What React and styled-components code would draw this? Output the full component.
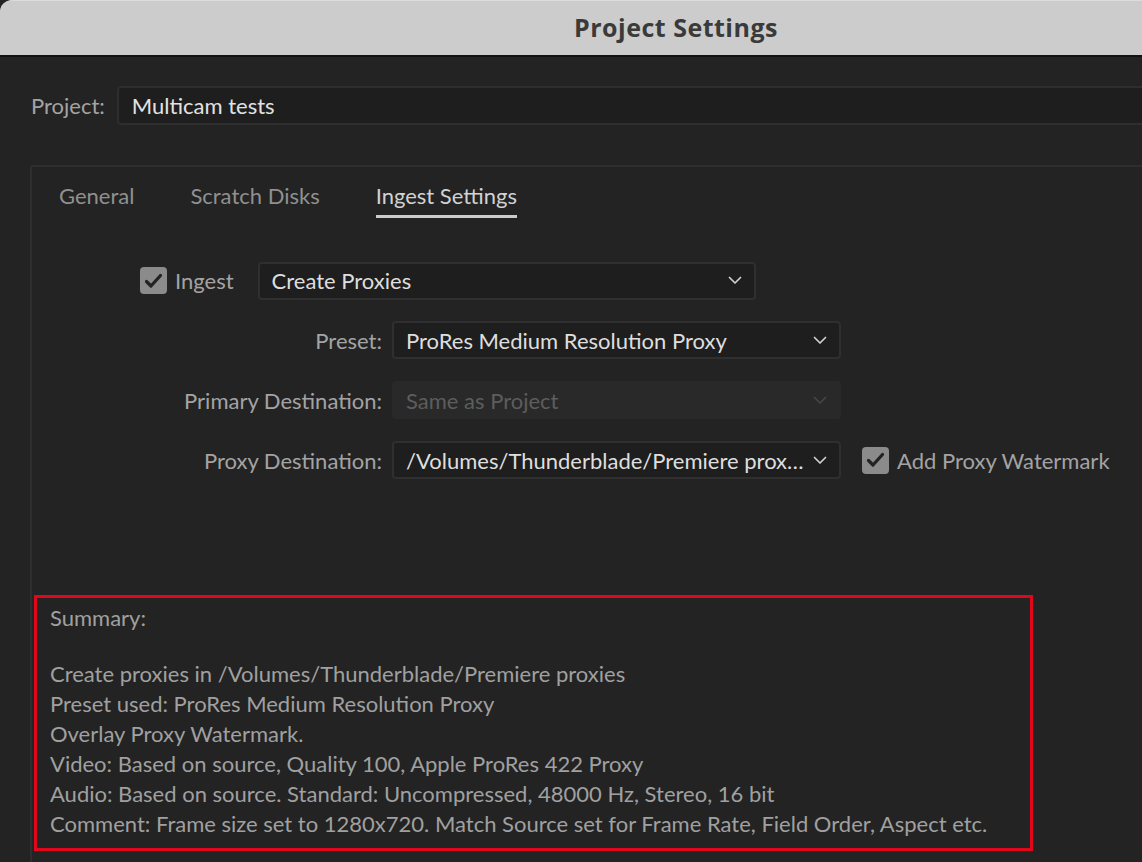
import React from "react";
import styled, { createGlobalStyle } from "styled-components";

const Global = createGlobalStyle`
  html, body { margin: 0; padding: 0; background: #232323; overflow: hidden; }
  #root { width: 1142px; height: 862px; overflow: hidden; }
  * { box-sizing: border-box; }
`;

const FONT = `"Lato", "Noto Sans", sans-serif`;

const Window = styled.div`
  width: 1352px;
  height: 862px;
  background: #232323;
  font-family: ${FONT};
  font-size: 22px;
  color: #a2a2a2;
`;

const TitleBar = styled.div`
  height: 57px;
  background: #cccccc;
  border-top-left-radius: 12px;
  border-top: 1px solid #dcdcdc;
  border-bottom: 2px solid #121212;
  display: flex;
  align-items: center;
  justify-content: center;
`;

const Title = styled.div`
  font-family: "Open Sans", "Noto Sans", sans-serif;
  font-weight: 700;
  font-size: 25px;
  letter-spacing: 0.5px;
  color: #3a3a3a;
  margin-top: -3px;
`;

const Body = styled.div`
  padding: 29px 31px 0 30px;
`;

const ProjectRow = styled.div`
  display: flex;
  align-items: center;
  gap: 12px;
  padding-left: 1px;
`;

const Label = styled.span`
  color: #a3a3a3;
  white-space: nowrap;
`;

const TextInput = styled.div`
  flex: 1;
  height: 39px;
  background: #1e1e1e;
  border: 2px solid #2e2e2e;
  border-radius: 4px;
  display: flex;
  align-items: center;
  padding-left: 13px;
  color: #e2e2e2;
`;

const Panel = styled.div`
  margin-top: 40px;
  border: 2px solid #2e2e2e;
  border-bottom: none;
  border-radius: 3px 3px 0 0;
  height: 720px;
`;

const Tabs = styled.div`
  display: flex;
  gap: 56px;
  padding: 16px 0 0 27px;
`;

const Tab = styled.div`
  color: ${(p) => (p.$active ? "#d2d2d2" : "#909090")};
  padding-bottom: 6px;
  border-bottom: 3px solid ${(p) => (p.$active ? "#cbcbcb" : "transparent")};
  line-height: 26px;
`;

const Form = styled.div`
  margin-top: 44px;
  display: flex;
  flex-direction: column;
  gap: 22px;
`;

const IngestRow = styled.div`
  display: flex;
  align-items: center;
  padding-left: 108px;
  height: 37px;
`;

const CheckWrap = styled.label`
  display: flex;
  align-items: center;
  gap: 8px;
  color: #a3a3a3;
  margin-left: ${(p) => p.$ml || 0}px;
`;

const Box = styled.span`
  width: 27px;
  height: 27px;
  border-radius: 4px;
  background: #8b8b8b;
  display: flex;
  align-items: center;
  justify-content: center;
`;

const Grid = styled.div`
  display: grid;
  grid-template-columns: 350px 449px auto;
  column-gap: 10px;
  row-gap: 22px;
  align-items: center;
`;

const FieldLabel = styled.div`
  text-align: right;
  color: #a3a3a3;
`;

const Select = styled.div`
  width: ${(p) => p.$w || 449}px;
  height: 38px;
  margin-left: ${(p) => p.$ml || 0}px;
  background: ${(p) => (p.$disabled ? "#292929" : "#1e1e1e")};
  border: 2px solid ${(p) => (p.$disabled ? "#292929" : "#2f2f2f")};
  border-radius: 4px;
  display: flex;
  align-items: center;
  padding: 0 12px 0 12px;
  color: ${(p) => (p.$disabled ? "#5d5d5d" : "#dedede")};
  gap: 8px;
`;

const SelectText = styled.span`
  flex: 1;
  white-space: nowrap;
  overflow: hidden;
  text-overflow: ellipsis;
`;

const Summary = styled.div`
  margin: 116px 0 0 2px;
  width: 999px;
  border: 3px solid #e0061b;
  padding: 5px 13px 9px;
  line-height: 30px;
  color: #a0a0a0;
`;

const SummaryHead = styled.div`
  margin-bottom: 26px;
`;

const Chevron = ({ dim }) => (
  <svg width="14" height="9" viewBox="0 0 14 9" fill="none">
    <path d="M1.5 1.5 L7 7 L12.5 1.5" stroke={dim ? "#454545" : "#d0d0d0"} strokeWidth="1.7" strokeLinecap="round" strokeLinejoin="round" />
  </svg>
);

const Check = () => (
  <svg width="19" height="16" viewBox="0 0 19 16" fill="none">
    <path d="M2.5 8.5 L7 13 L16.5 2.5" stroke="#222" strokeWidth="3.2" strokeLinecap="round" strokeLinejoin="round" />
  </svg>
);

const Checkbox = ({ label, ml }) => (
  <CheckWrap $ml={ml}>
    <Box>
      <Check />
    </Box>
    {label}
  </CheckWrap>
);

const Dropdown = ({ value, w, ml, disabled }) => (
  <Select $w={w} $ml={ml} $disabled={disabled}>
    <SelectText>{value}</SelectText>
    <Chevron dim={disabled} />
  </Select>
);

const summaryLines = [
  "Create proxies in /Volumes/Thunderblade/Premiere proxies",
  "Preset used: ProRes Medium Resolution Proxy",
  "Overlay Proxy Watermark.",
  "Video: Based on source, Quality 100, Apple ProRes 422 Proxy",
  "Audio: Based on source. Standard: Uncompressed, 48000 Hz, Stereo, 16 bit",
  "Comment: Frame size set to 1280x720. Match Source set for Frame Rate, Field Order, Aspect etc.",
];

export default function App() {
  return (
    <Window>
      <Global />
      <TitleBar>
        <Title>Project Settings</Title>
      </TitleBar>
      <Body>
        <ProjectRow>
          <Label>Project:</Label>
          <TextInput>Multicam tests</TextInput>
        </ProjectRow>
        <Panel>
          <Tabs>
            <Tab>General</Tab>
            <Tab>Scratch Disks</Tab>
            <Tab $active>Ingest Settings</Tab>
          </Tabs>
          <Form>
            <IngestRow>
              <Checkbox label="Ingest" />
              <Dropdown value="Create Proxies" w={498} ml={24} />
            </IngestRow>
            <Grid>
              <FieldLabel>Preset:</FieldLabel>
              <Dropdown value="ProRes Medium Resolution Proxy" />
              <span />
              <FieldLabel>Primary Destination:</FieldLabel>
              <Dropdown value="Same as Project" disabled />
              <span />
              <FieldLabel>Proxy Destination:</FieldLabel>
              <Dropdown value="/Volumes/Thunderblade/Premiere proxies" />
              <Checkbox label="Add Proxy Watermark" ml={11} />
            </Grid>
          </Form>
          <Summary>
            <SummaryHead>Summary:</SummaryHead>
            {summaryLines.map((l) => (
              <div key={l}>{l}</div>
            ))}
          </Summary>
        </Panel>
      </Body>
    </Window>
  );
}
